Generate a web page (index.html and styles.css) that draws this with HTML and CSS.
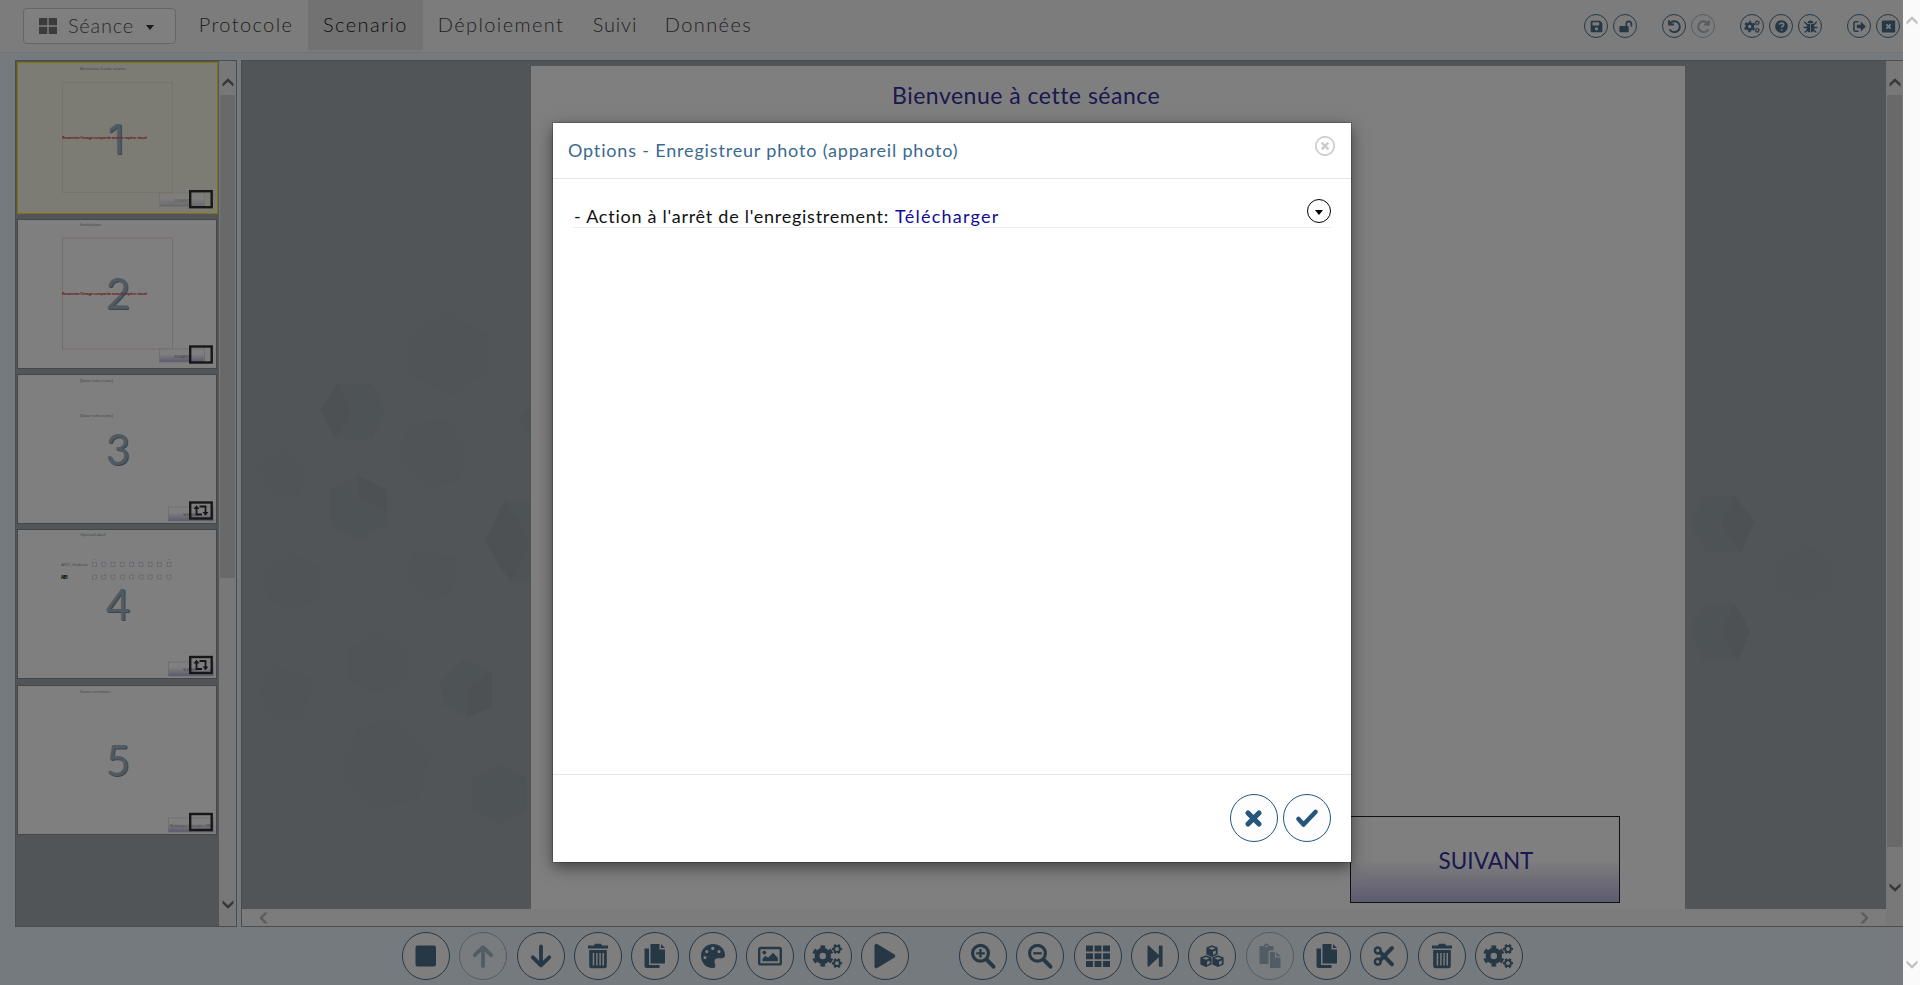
FILE: index.html
```html
<!DOCTYPE html>
<html lang="fr">
<head>
<meta charset="utf-8">
<title>Scenario</title>
<link rel="stylesheet" href="styles.css">
</head>
<body>
<svg class="defs" aria-hidden="true">
  <defs>
    <linearGradient id="mini" x1="0" y1="0" x2="0" y2="1"><stop offset=".4" stop-color="#fff"/><stop offset="1" stop-color="#b8b4dc"/></linearGradient>
    <symbol id="stop" viewBox="0 0 32 32"><rect x="5.500" y="5.500" width="20.500" height="21" rx="2"/></symbol>
    <symbol id="down" viewBox="0 0 32 32"><path d="M16 6.500V25M7.800 17.300L16 25.300L24.200 17.300" class="line" stroke-width="3.800"/></symbol>
    <symbol id="up" viewBox="0 0 32 32"><path d="M16 26V7.500M7.800 15.200L16 7.200L24.200 15.200" class="line" stroke-width="3.800"/></symbol>
    <symbol id="trash" viewBox="0 0 32 32"><path d="M6 5.500h6l1-1.800h6l1 1.800h6v3H6z"/><path fill-rule="evenodd" d="M7.200 10h17.600v16a2.200 2.200 0 0 1-2.200 2.200H9.400A2.200 2.200 0 0 1 7.200 26zM10.700 13v12.500h1.500V13zM14.200 13v12.500h1.400V13zM17.400 13v12.500h1.400V13zM20.500 13v12.500H22V13z"/></symbol>
    <symbol id="copy" viewBox="0 0 32 32"><path d="M11.500 4h9v5.500h5.500v14h-14.500z"/><path d="M22 4l4 4h-4z"/><path d="M5.500 8.500H10V25h10.500v3h-13a2 2 0 0 1-2-2z"/></symbol>
    <symbol id="paste" viewBox="0 0 32 32"><path fill-rule="evenodd" d="M5.500 6H10a2.500 2.500 0 0 1 5 0h4.500v4.500H14.500V24h-9zM11.500 5.500v1.700h2V5.500z"/><path d="M16 12h5v5.500h5.500V28H16z"/><path d="M22.300 12l4.200 4.200h-4.200z"/></symbol>
    <symbol id="palette" viewBox="0 0 32 32"><path fill-rule="evenodd" d="M16 4C9.300 4 4 9.300 4 16c0 6.400 4.700 12 11.500 12 3 0 3.500-2.500 2.400-4.600-1.300-2.600.2-5.200 3-5.200h4C27 18.200 28 16.800 28 15c0-6.200-5.300-11-12-11zM8 16a1.600 1.600 0 1 1 0 3.200A1.600 1.600 0 0 1 8 16zM9.800 10a1.600 1.600 0 1 1 0 3.200 1.600 1.600 0 0 1 0-3.200zM15.800 6.800a1.600 1.600 0 1 1 0 3.200 1.600 1.600 0 0 1 0-3.200zM22 10a1.600 1.600 0 1 1 0 3.200 1.600 1.600 0 0 1 0-3.200z"/></symbol>
    <symbol id="image" viewBox="0 0 32 32"><rect x="5.200" y="8" width="21.600" height="16.400" rx="1.500" class="line" stroke-width="2.400"/><circle cx="10.300" cy="12.600" r="1.900"/><path d="M8.500 21.300v-2.500l3-3 2.500 2 5-5 4.800 5v3.500z"/></symbol>
    <symbol id="gears" viewBox="0 0 32 32"><circle cx="10.800" cy="16" r="5.700" class="line" stroke-width="5"/><circle cx="10.800" cy="16" r="9.200" class="line butt" stroke-width="3" pathLength="48" stroke-dasharray="4 4" stroke-dashoffset="2" transform="rotate(-90 10.800 16)"/><circle cx="25" cy="9" r="2.900" class="line" stroke-width="2"/><circle cx="25" cy="9" r="4.300" class="line butt" stroke-width="1.600" pathLength="48" stroke-dasharray="4 4" stroke-dashoffset="2"/><circle cx="25" cy="23.200" r="2.900" class="line" stroke-width="2"/><circle cx="25" cy="23.200" r="4.300" class="line butt" stroke-width="1.600" pathLength="48" stroke-dasharray="4 4" stroke-dashoffset="2"/></symbol>
    <symbol id="play" viewBox="0 0 32 32"><path d="M5.500 5.500a1.800 1.800 0 0 1 2.700-1.500L25.500 14.400a1.800 1.800 0 0 1 0 3L8.200 28a1.800 1.800 0 0 1-2.700-1.500z"/></symbol>
    <symbol id="zoomin" viewBox="0 0 32 32"><circle cx="13.500" cy="13.300" r="7.900" class="line" stroke-width="3.200"/><path d="M20 20L26.500 26.700" class="line" stroke-width="4"/><path d="M13.500 9v8.600M9.200 13.300h8.600" class="line butt" stroke-width="2.300"/></symbol>
    <symbol id="zoomout" viewBox="0 0 32 32"><circle cx="13.500" cy="13.300" r="7.900" class="line" stroke-width="3.200"/><path d="M20 20L26.500 26.700" class="line" stroke-width="4"/><path d="M9.200 13.300h8.600" class="line butt" stroke-width="2.300"/></symbol>
    <symbol id="grid" viewBox="0 0 32 32"><path d="M4 5.500h7v6H4zM12.500 5.500h7v6h-7zM21 5.500h7v6h-7zM4 13.200h7v6H4zM12.500 13.200h7v6h-7zM21 13.200h7v6h-7zM4 20.900h7v6H4zM12.500 20.900h7v6h-7zM21 20.900h7v6h-7z"/></symbol>
    <symbol id="step" viewBox="0 0 32 32"><path d="M8.500 6.500c0-1 1-1.200 1.700-.5L19.800 15V6.500a1 1 0 0 1 1-1h1.800a1 1 0 0 1 1 1v19.200a1 1 0 0 1-1 1h-1.800a1 1 0 0 1-1-1V17.300l-9.600 9c-.7.700-1.700.3-1.700-.6z"/></symbol>
    <symbol id="cubes" viewBox="0 0 32 32"><g id="cube"><path fill-rule="evenodd" d="M16 5.200l5.600 2.200v7L16 17l-5.600-2.600v-7zM12.500 8.300L16 9.800l3.500-1.500L16 7zM17 11.700v3.200l2.800-1.300v-3.200z"/></g><use href="#cube" x="-6" y="10"/><use href="#cube" x="6" y="10"/></symbol>
    <symbol id="cut" viewBox="0 0 32 32"><circle cx="9.800" cy="10.500" r="2.900" class="line" stroke-width="2.500"/><circle cx="9.800" cy="21.700" r="2.900" class="line" stroke-width="2.500"/><path d="M12.500 12.500L24 24.300M12.500 19.800L24 8" class="line" stroke-width="4"/></symbol>
    <symbol id="save" viewBox="0 0 32 32"><path fill-rule="evenodd" d="M7.500 5h15L27 9.500v15a2.500 2.500 0 0 1-2.500 2.500h-17A2.500 2.500 0 0 1 5 24.500v-17A2.500 2.500 0 0 1 7.500 5zM8.500 8v6h12.500V8zM16 17.200a3.200 3.200 0 1 0 0 6.400 3.200 3.200 0 0 0 0-6.400z"/></symbol>
    <symbol id="unlock" viewBox="0 0 32 32"><rect x="4.500" y="15" width="17.500" height="12" rx="2"/><path d="M17.500 15v-4a4.800 4.800 0 0 1 9.600 0v4" class="line" stroke-width="3.200"/></symbol>
    <symbol id="undo" viewBox="0 0 32 32"><path d="M8 9.500a10.300 10.300 0 1 1-.5 13" class="line" stroke-width="3.600"/><path d="M4 4h3.500v6.500H15V14H4z"/></symbol>
    <symbol id="redo" viewBox="0 0 32 32"><path d="M24 9.500a10.300 10.300 0 1 0 .5 13" class="line" stroke-width="3.600"/><path d="M28 4h-3.500v6.500H17V14h11z"/></symbol>
    <symbol id="help" viewBox="0 0 32 32"><circle cx="16" cy="16" r="12"/><path d="M12.300 12.800c.2-4.600 7.800-4.600 7.800-.3 0 3-3.900 2.800-3.900 5.800M16.200 21v3" class="cutout" stroke-width="2.900"/></symbol>
    <symbol id="bug" viewBox="0 0 32 32"><path d="M10.500 10a5.500 5.500 0 0 1 11 0z"/><path d="M9 11.500h6.300V27C11 27 9 24.500 9 21zM16.700 11.500H23V21c0 3.500-2 6-6.300 6z"/><path d="M5 8l5 4.500M27 8l-5 4.500M4 18h5M23 18h5M6 26.500l5-5M26 26.500l-5-5" class="line" stroke-width="2.600"/></symbol>
    <symbol id="exit" viewBox="0 0 32 32"><path d="M13 7H8a2.500 2.500 0 0 0-2.500 2.500v13A2.500 2.500 0 0 0 8 25h5" class="line" stroke-width="3"/><path d="M11 12.500h7.500V6.500L28 16l-9.500 9.500v-6H11z"/></symbol>
    <symbol id="closebox" viewBox="0 0 32 32"><rect x="3.500" y="4.500" width="25" height="23" rx="2"/><path d="M12 12l8 8M20 12l-8 8" class="cutout" stroke-width="3.500"/></symbol>
    <symbol id="cross" viewBox="0 0 32 32"><path d="M10 11L21 22M21 11L10 22" class="line" stroke-width="5.200"/></symbol>
    <symbol id="check" viewBox="0 0 32 32"><path d="M7.500 17L12.500 22.500L24.500 10" class="line" stroke-width="4.600"/></symbol>
    <symbol id="chev" viewBox="0 0 12 10"><path d="M.5 5.500L6 .3l5.500 5.200v3.300L6 3.800.5 8.800z"/></symbol>
    <symbol id="loop" viewBox="0 0 16 12"><path d="M3.500 3.500V10H9M6.500 2h6v6" class="line butt" stroke-width="1.800"/><path d="M.5 4.500L3.500.8l3 3.700zM9.500 7.500l3 3.700 3-3.700z"/></symbol>
  </defs>
</svg>

<div class="app">
  <header class="topbar">
    <button class="seance">
      <svg class="tiles" viewBox="0 0 18 16"><path d="M0 0h8.300v7.300H0zM9.700 0H18v7.300H9.700zM0 8.700h8.300V16H0zM9.700 8.700H18V16H9.700z"/></svg>
      <span class="seance-name">Séance</span><i class="caret"></i>
    </button>
    <nav class="tabs">
      <a class="tab t1">Protocole</a><a class="tab t2 active">Scenario</a><a class="tab t3">Déploiement</a><a class="tab t4">Suivi</a><a class="tab t5">Données</a>
    </nav>
    <div class="tools">
      <div class="group"><span class="ic"><svg><use href="#save"/></svg></span><span class="ic"><svg><use href="#unlock"/></svg></span></div>
      <div class="group"><span class="ic"><svg><use href="#undo"/></svg></span><span class="ic off"><svg><use href="#redo"/></svg></span></div>
      <div class="group"><span class="ic"><svg><use href="#gears"/></svg></span><span class="ic"><svg><use href="#help"/></svg></span><span class="ic"><svg><use href="#bug"/></svg></span></div>
      <div class="group"><span class="ic"><svg><use href="#exit"/></svg></span><span class="ic"><svg><use href="#closebox"/></svg></span></div>
    </div>
  </header>

  <main class="work">
    <aside class="side">
      <div class="thumbs">
        <svg class="thumb selected" viewBox="0 0 201 151.500">
          <text x="63" y="8" class="tiny" textLength="46">Bienvenue à cette séance</text>
          <rect x="45.500" y="20.500" width="110" height="110" class="zone"/>
          <text x="99" y="91.500" class="num one">1</text>
          <text x="45" y="77" class="warn" textLength="85">Ressentez l'image comparée avec le repère visuel</text>
          <g class="faded"><rect x="142.500" y="131" width="45" height="13.500" class="mini"/><text x="157" y="139.500" class="tiny" textLength="15">SUIVANT</text></g>
          <rect x="173.200" y="129.200" width="21.500" height="16" class="mark"/>
        </svg>
        <svg class="thumb" viewBox="0 0 200 150">
          <text x="63" y="6.500" class="tiny" textLength="21">Instructions</text>
          <rect x="45.500" y="19" width="110" height="111" class="zone"/>
          <text x="101" y="90" class="num">2</text>
          <text x="45" y="75.500" class="warn" textLength="85">Ressentez l'image comparée avec le repère visuel</text>
          <rect x="142.500" y="130" width="45" height="13" class="mini"/><text x="157" y="138.500" class="tiny" textLength="15">SUIVANT</text>
          <rect x="173.200" y="127.500" width="21.500" height="16" class="mark"/>
        </svg>
        <svg class="thumb" viewBox="0 0 200 150">
          <text x="63" y="7.500" class="tiny" textLength="33">[Saisir votre texte]</text>
          <text x="63" y="42.500" class="tiny" textLength="33">[Saisir votre texte]</text>
          <text x="101" y="91" class="num">3</text>
          <rect x="151.500" y="133" width="45" height="14" class="mini"/><text x="166" y="142" class="tiny" textLength="15">SUIVANT</text>
          <rect x="173.200" y="128.500" width="21.500" height="16" class="mark"/><use href="#loop" x="176" y="130.500" width="16" height="12" class="dark"/>
        </svg>
        <svg class="thumb" viewBox="0 0 200 150">
          <text x="63" y="7" class="tiny" textLength="26">/SpecialLabel/</text>
          <text x="44" y="36.500" class="tiny" textLength="27">A001_Hedonic</text><text x="44" y="49.500" class="tiny black" textLength="7">AB1</text>
          <path class="dots" d="M75.500 33.500h4v4h-4zM84.800 33.500h4v4h-4zM94 33.500h4v4h-4zM103.300 33.500h4v4h-4zM112.500 33.500h4v4h-4zM122 33.500h4v4h-4zM131.200 33.500h4v4h-4zM140.500 33.500h4v4h-4zM150 33.500h4v4h-4zM75.500 46h4v4h-4zM84.800 46h4v4h-4zM94 46h4v4h-4zM103.300 46h4v4h-4zM112.500 46h4v4h-4zM122 46h4v4h-4zM131.200 46h4v4h-4zM140.500 46h4v4h-4zM150 46h4v4h-4zM77 30.500h1M151.500 30.500h2"/>
          <text x="101" y="90.500" class="num">4</text>
          <rect x="151.500" y="133" width="45" height="14" class="mini"/><text x="166" y="142" class="tiny" textLength="15">SUIVANT</text>
          <rect x="173.200" y="128" width="21.500" height="16" class="mark"/><use href="#loop" x="176" y="130" width="16" height="12" class="dark"/>
        </svg>
        <svg class="thumb" viewBox="0 0 200 150">
          <text x="63" y="8" class="tiny" textLength="31">Séance terminée</text>
          <text x="101" y="91" class="num">5</text>
          <rect x="151.500" y="133" width="45" height="14" class="mini"/><text x="153" y="142" class="tiny" textLength="42">Renvoyer vers une URL</text>
          <rect x="173.200" y="129" width="21.500" height="16" class="mark"/>
        </svg>
      </div>
      <div class="vbar side-bar"><svg class="arrow"><use href="#chev"/></svg><i></i><svg class="arrow flip"><use href="#chev"/></svg></div>
    </aside>

    <section class="stage">
      <div class="canvas">
        <svg class="cubes-bg" viewBox="241 61 1646 848">
          <g transform="translate(0 -52.100) scale(1 1.186)">
            <g class="hex-dark"><path d="M319 389l18-22h34l14 23-14 24h-38zM329 456l29-11 28 12v29l-27 14-30-13zM484 501l20-36h30v70h-24zM439 620l24-20 28 10v30l-24 9-24-10zM472 700l28-12 26 12v28l-27 11-27-13zM518 396l14-18v40z"/></g>
            <g class="hex-light"><path d="M406 331l38-25 44 20v30l-38 22-40-18zM398 430l10-29 38-4 20 25-8 28-35 5zM256 440l28-20 22 20-8 22h-24zM264 525l26-15 28 12v27l-28 10-24-11zM403 530l10-20 45 3-8 32-24 4zM347 592l27-15 31 14v28l-30 10-28-12zM340 695l17-37 38-8 35 29-13 40-42 7zM258 625l14-20 42 12-12 32h-32z"/></g>
            <g class="hex-shade"><path d="M319 389l18-22 13 24-15 23zM358 445l28 12v20l-28-14zM484 501l20-36 26 36-20 34zM467 624l24-14v30l-24 9z"/></g>
          </g>
          <g class="hex-dark"><path d="M1690 523l14-27h31l19 26-13 31h-34zM1690 630l14-27h30l16 28-12 30h-35z"/></g>
          <g class="hex-light"><path d="M1778 565l25-21 28 15v30l-27 12-26-13z"/></g>
          <g class="hex-shade"><path d="M1722 525l13-29 19 26-13 31zM1722 633l12-30 16 28-12 30z"/></g>
        </svg>
        <div class="page">
          <h1>Bienvenue à cette séance</h1>
          <button class="next">SUIVANT</button>
        </div>
        <div class="hbar"><svg class="arrow left"><use href="#chev"/></svg><svg class="arrow right"><use href="#chev"/></svg></div>
      </div>
      <div class="vbar stage-bar"><svg class="arrow"><use href="#chev"/></svg><i></i><svg class="arrow flip"><use href="#chev"/></svg></div>
    </section>
  </main>

  <footer class="bottom">
    <div class="row">
      <span class="btn"><svg><use href="#stop"/></svg></span><span class="btn off"><svg><use href="#up"/></svg></span><span class="btn"><svg><use href="#down"/></svg></span><span class="btn"><svg><use href="#trash"/></svg></span><span class="btn"><svg><use href="#copy"/></svg></span><span class="btn"><svg><use href="#palette"/></svg></span><span class="btn"><svg><use href="#image"/></svg></span><span class="btn"><svg><use href="#gears"/></svg></span><span class="btn"><svg><use href="#play"/></svg></span>
    </div>
    <div class="row">
      <span class="btn"><svg><use href="#zoomin"/></svg></span><span class="btn"><svg><use href="#zoomout"/></svg></span><span class="btn"><svg><use href="#grid"/></svg></span><span class="btn"><svg><use href="#step"/></svg></span><span class="btn"><svg><use href="#cubes"/></svg></span><span class="btn off"><svg><use href="#paste"/></svg></span><span class="btn"><svg><use href="#copy"/></svg></span><span class="btn"><svg><use href="#cut"/></svg></span><span class="btn"><svg><use href="#trash"/></svg></span><span class="btn"><svg><use href="#gears"/></svg></span>
    </div>
  </footer>

  <div class="overlay">
    <div class="modal">
      <div class="modal-head"><span class="modal-title">Options - Enregistreur photo (appareil photo)</span>
        <svg class="x" viewBox="0 0 20 20"><circle cx="10" cy="10" r="9.200"/><path d="M6.700 6.700l6.600 6.600M13.300 6.700l-6.600 6.600"/></svg></div>
      <div class="modal-body">
        <div class="option"><span class="label">- Action à l'arrêt de l'enregistrement:</span><span class="value">Télécharger</span><span class="drop"><i class="caret"></i></span></div>
      </div>
      <div class="modal-foot"><span class="btn"><svg><use href="#cross"/></svg></span><span class="btn"><svg><use href="#check"/></svg></span></div>
    </div>
  </div>
</div>
<div class="window-bar"><svg class="arrow"><use href="#chev"/></svg><svg class="arrow flip"><use href="#chev"/></svg></div>
</body>
</html>
```
FILE: styles.css
```css
* { box-sizing: border-box; }
body { margin: 0; height: 985px; display: flex; overflow: hidden; font-family: Lato, "Liberation Sans", sans-serif; }
.defs { position: absolute; width: 0; height: 0; }
svg { display: block; fill: currentColor; flex: none; }
.line { fill: none; stroke: currentColor; stroke-linecap: round; stroke-linejoin: round; }
.line.butt { stroke-linecap: butt; stroke-linejoin: miter; }
.cutout { fill: none; stroke: #f8f8f8; }
button { font: inherit; }

.app { position: relative; width: 1903px; display: flex; flex-direction: column; background: #ebf5fd; }
.topbar { height: 53px; background: #f8f8f8; border-bottom: 1px solid #e7e3e3; display: flex; align-items: flex-start; padding-left: 23px; }
.seance { width: 153px; height: 36px; margin-top: 8px; padding: 0 0 0 15px; background: #fff; border: 1px solid #ccc; border-radius: 4px; display: flex; align-items: center; font-size: 20px; font-weight: 300; color: #555; letter-spacing: .75px; }
.seance-name { padding-bottom: 3px; }
.seance .tiles { width: 18px; height: 16px; margin-right: 11px; color: #777; }
.caret { width: 0; height: 0; border: 4.500px solid transparent; border-top: 5px solid #333; border-bottom: 0; }
.seance .caret { margin: 3px 0 0 12px; }
.tabs { display: flex; margin-left: 8px; }
.tab { height: 50px; line-height: 48px; text-align: center; font-size: 20px; font-weight: 300; color: #444; letter-spacing: 1.400px; white-space: nowrap; }
.tab.active { background: #e4e4e4; color: #222; }
.t1 { width: 124px; } .t2 { width: 115px; } .t3 { width: 156px; } .t5 { width: 115px; }
.t4 { width: 72px; letter-spacing: .8px; }
.tools { margin: 14px 3px 0 auto; display: flex; gap: 25px; color: #4b7697; }
.group { display: flex; gap: 5px; }
.ic { width: 24px; height: 24px; border: 1px solid #4c718d; border-radius: 50%; display: flex; align-items: center; justify-content: center; }
.ic svg { width: 17px; height: 17px; }
.tools .ic, .bottom .btn { border-color: #4c718d; color: #4c718d; }
.off { opacity: .45; }

.work { margin: 7px 0 0 15px; height: 867px; display: flex; gap: 4px; }
.side { width: 222px; border: 1px solid #94999d; background: #a2aaaf; display: flex; }
.thumbs { width: 203px; padding: 1px; display: flex; flex-direction: column; gap: 5.300px; }
.thumb { width: 200px; height: 150px; background: #fff; outline: 1px solid #888e92; outline-offset: -1px; }
.thumb.selected { width: 201px; height: 151.500px; background: #fbf9e8; outline-color: #fee614; }
.tiny { font-size: 4.300px; fill: #888; font-family: "Open Sans", sans-serif; }
.tiny.black { fill: #000; font-weight: 700; }
.warn { font-size: 4px; font-weight: 700; fill: #d64a4a; font-family: "Open Sans", sans-serif; }
.num { font-size: 42px; fill: #9fb4c4; text-anchor: middle; text-shadow: 1px 1px 0 #808890; }
.num.one { font-family: Inter, sans-serif; font-size: 41px; }
.selected .zone, .faded { opacity: .6; }
.zone { fill: none; stroke: #ecc6c6; stroke-width: .7; }
.mini { fill: url(#mini); stroke: #ccc; stroke-width: .6; }
.mark { fill: none; stroke: #2e2e2e; stroke-width: 2.400; }
.dark { color: #2e2e2e; }
.dots { fill: none; stroke: #aaa8c0; stroke-width: .7; stroke-dasharray: 1.300 .7; }
.vbar { width: 17px; background: #f0f0f0; display: flex; flex-direction: column; align-items: center; color: #707070; }
.vbar .arrow { margin-top: 17px; }
.vbar i { width: 15px; background: #d2d2d2; margin-top: 7px; }
.vbar .flip { margin: auto 0 17px; }
.side-bar i { height: 483px; }
.stage-bar i { height: 752px; }
.stage-bar .flip { margin-bottom: 34px; }
.arrow { width: 12px; height: 10px; }
.flip { transform: rotate(180deg); }
.stage { width: 1662px; border: 1px solid #94999d; border-right: 0; display: flex; background: #a2aaaf; }
.canvas { position: relative; width: 1645px; display: flex; flex-direction: column; }
.cubes-bg { position: absolute; inset: 0; width: 1645px; height: 848px; }
.hex-dark { fill: #9da6ab; }
.hex-light { fill: #a0a8ac; }
.hex-shade { fill: #9aa2a7; }
.page { position: relative; width: 1154px; height: 843px; margin: 5px 0 0 289px; background: #fff; display: flex; flex-direction: column; }
.page h1 { margin: 14px 0 0 361px; font-size: 23px; line-height: 30px; font-weight: 400; letter-spacing: .5px; color: #36309f; }
.next { margin: auto 65px 6px auto; width: 270px; height: 87px; border: 1px solid #222; background: linear-gradient(#fff 50%, #bab6de); font-size: 22.500px; color: #36309f; padding: 2px 0 0 2px; }
.hbar { height: 17px; background: #f8f8f8; display: flex; align-items: center; justify-content: space-between; padding: 0 16px; color: #bbb; }
.left { transform: rotate(-90deg); } .right { transform: rotate(90deg); }

.bottom { flex: 1; display: flex; gap: 50px; padding: 5px 0 0 402px; }
.row { display: flex; gap: 9.370px; }
.btn { width: 48px; height: 48px; border: 1px solid #24567e; border-radius: 50%; background: #fdfdfd; color: #24567e; display: flex; align-items: center; justify-content: center; }
.btn svg { width: 32px; height: 32px; }

.overlay { position: absolute; inset: 0; background: rgba(0, 0, 0, .5); padding: 123px 0 0 553px; }
.modal { width: 798px; height: 739px; background: #fff; box-shadow: 0 0 0 1px rgba(0,0,0,.2), 0 5px 15px rgba(0, 0, 0, .5); display: flex; flex-direction: column; }
.modal-head { height: 56px; border-bottom: 1px solid #e5e5e5; display: flex; justify-content: space-between; padding: 13px 16px 0 15px; }
.modal-title { font-size: 18px; line-height: 28px; color: #3a6a90; letter-spacing: .830px; }
.x { width: 20px; height: 20px; fill: none; stroke: #ccc; stroke-width: 1.700; }
.x path { stroke-width: 2.600; }
.modal-body { flex: 1; padding: 20px 20px 0; }
.option { height: 29px; border-bottom: 1px solid #efefef; display: flex; font-size: 18px; line-height: 34px; padding-left: 1px; letter-spacing: .740px; color: #111; white-space: nowrap; }
.label { width: 321px; }
.value { color: #100c95; letter-spacing: 1.250px; }
.drop { width: 24px; height: 24px; margin-left: auto; border: 1.500px solid #000; border-radius: 50%; display: flex; align-items: center; justify-content: center; }
.drop .caret { border-top-color: #000; margin-top: 2px; }
.modal-foot { height: 88px; border-top: 1px solid #e5e5e5; display: flex; justify-content: flex-end; gap: 5px; padding: 19px 20px 0; }
.window-bar { width: 17px; background: #fafafa; display: flex; flex-direction: column; align-items: center; justify-content: space-between; padding: 16px 0; color: #c4c4c4; }
```
